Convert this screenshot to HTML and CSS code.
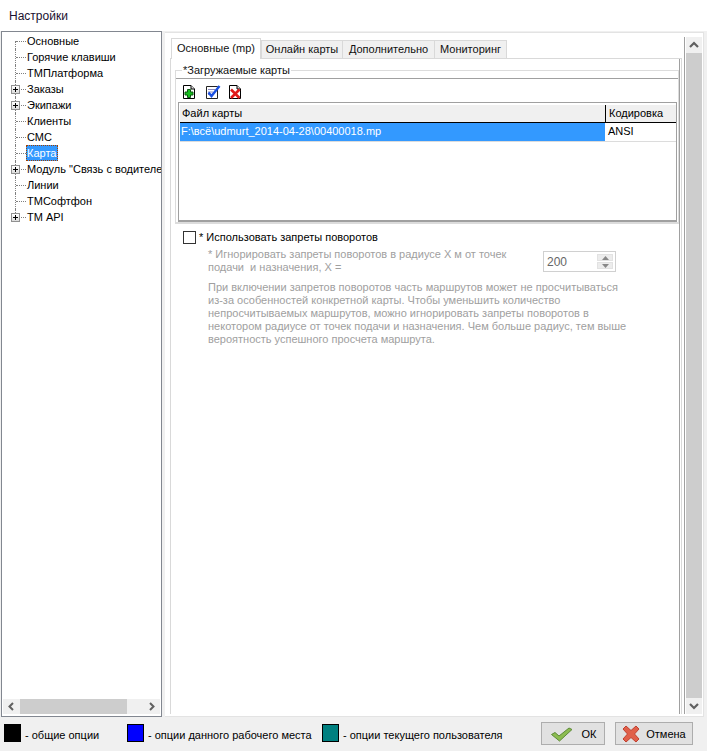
FILE: index.html
```html
<!DOCTYPE html>
<html lang="ru">
<head>
<meta charset="utf-8">
<title>Настройки</title>
<link rel="stylesheet" href="styles.css">
</head>
<body>
<div class="window">
  <header class="title">Настройки</header>
  <div class="content">
    <aside class="tree">
      <ul class="nodes">
        <li class="node"><span class="gutter"></span><span class="label">Основные</span></li>
        <li class="node"><span class="gutter"></span><span class="label">Горячие клавиши</span></li>
        <li class="node"><span class="gutter"></span><span class="label">ТМПлатформа</span></li>
        <li class="node"><span class="gutter"><i class="exp"></i></span><span class="label">Заказы</span></li>
        <li class="node"><span class="gutter"><i class="exp"></i></span><span class="label">Экипажи</span></li>
        <li class="node"><span class="gutter"></span><span class="label">Клиенты</span></li>
        <li class="node"><span class="gutter"></span><span class="label">СМС</span></li>
        <li class="node"><span class="gutter"></span><span class="label selected">Карта</span></li>
        <li class="node"><span class="gutter"><i class="exp"></i></span><span class="label">Модуль "Связь с водителем"</span></li>
        <li class="node"><span class="gutter"></span><span class="label">Линии</span></li>
        <li class="node"><span class="gutter"></span><span class="label">ТМСофтфон</span></li>
        <li class="node last"><span class="gutter"><i class="exp"></i></span><span class="label">ТМ API</span></li>
      </ul>
      <div class="hscroll">
        <svg class="arrow" width="17" height="15" viewBox="0 0 17 15"><path d="M10 4 L6.500 7.500 L10 11" fill="none" stroke="#606060" stroke-width="2"/></svg>
        <div class="htrack"><div class="hthumb"></div></div>
        <svg class="arrow" width="17" height="15" viewBox="0 0 17 15"><path d="M7 4 L10.500 7.500 L7 11" fill="none" stroke="#606060" stroke-width="2"/></svg>
      </div>
    </aside>
    <main class="main">
      <div class="pane">
        <nav class="tabs">
          <div class="tab active">Основные (mp)</div>
          <div class="tab">Онлайн карты</div>
          <div class="tab">Дополнительно</div>
          <div class="tab">Мониторинг</div>
        </nav>
        <section class="page">
          <div class="page-body">
            <fieldset class="group">
              <legend class="legend">*Загружаемые карты</legend>
              <div class="inner">
                <div class="toolbar">
                  <svg width="16" height="16" viewBox="0 0 16 16"><path d="M1.500 1.500H9L12.500 5V14.500H1.500Z" fill="#fff" stroke="#000"/><path d="M9 1.500V5H12.500" fill="#ddd" stroke="#000"/><path d="M5.500 5.500H8.500V8H11V11H8.500V13.500H5.500V11H3V8H5.500Z" fill="#18c020" stroke="#0a5a10"/></svg>
                  <svg width="16" height="16" viewBox="0 0 16 16"><path d="M1.500 2.500H12.500V14.500H1.500Z" fill="#fff" stroke="#222"/><path d="M3 5.500H10M3 8H8M3 10.500H7" stroke="#8a8ac0"/><path d="M3.500 8.500L6.500 12L14.500 2" fill="none" stroke="#1a50e0" stroke-width="2.400"/></svg>
                  <svg width="16" height="16" viewBox="0 0 16 16"><path d="M1.500 1.500H9L12.500 5V14.500H1.500Z" fill="#fff" stroke="#000"/><path d="M9 1.500V5H12.500" fill="#ddd" stroke="#000"/><path d="M3 5.500L11.500 14M11.500 5.500L3 14" stroke="#e01818" stroke-width="2.600"/></svg>
                </div>
                <div class="grid">
                  <div class="grid-head">
                    <div class="cell col-file">Файл карты</div>
                    <div class="cell col-enc">Кодировка</div>
                  </div>
                  <div class="grid-row">
                    <div class="cell col-file row-sel">F:\всё\udmurt_2014-04-28\00400018.mp</div>
                    <div class="cell col-enc">ANSI</div>
                  </div>
                </div>
              </div>
            </fieldset>
            <label class="check-line"><span class="check"></span><span>* Использовать запреты поворотов</span></label>
            <div class="radius">
              <p class="radius-text">* Игнорировать запреты поворотов в радиусе Х м от точек<br>подачи&nbsp; и назначения, Х =</p>
              <div class="spin">
                <span class="spin-value">200</span>
                <span class="spin-btns">
                  <span class="spin-btn"><svg width="7" height="4" viewBox="0 0 7 4"><path d="M3.500 0L7 4H0Z" fill="#888"/></svg></span>
                  <span class="spin-btn"><svg width="7" height="4" viewBox="0 0 7 4"><path d="M0 0H7L3.500 4Z" fill="#888"/></svg></span>
                </span>
              </div>
            </div>
            <p class="note">При включении запретов поворотов часть маршрутов может не просчитываться<br>из-за особенностей конкретной карты. Чтобы уменьшить количество<br>непросчитываемых маршрутов, можно игнорировать запреты поворотов в<br>некотором радиусе от точек подачи и назначения. Чем больше радиус, тем выше<br>вероятность успешного просчета маршрута.</p>
          </div>
        </section>
      </div>
      <div class="vscroll">
        <svg width="16" height="16" viewBox="0 0 16 16"><path d="M4 10L8 6L12 10" fill="none" stroke="#606060" stroke-width="2.200"/></svg>
        <div class="vthumb"></div>
        <svg width="16" height="16" viewBox="0 0 16 16"><path d="M4 6L8 10L12 6" fill="none" stroke="#606060" stroke-width="2.200"/></svg>
      </div>
    </main>
  </div>
  <footer class="footer">
    <div class="legend-item item-general"><span class="swatch black"></span><span class="legend-text">- общие опции</span></div>
    <div class="legend-item item-place"><span class="swatch blue"></span><span class="legend-text">- опции данного рабочего места</span></div>
    <div class="legend-item item-user"><span class="swatch teal"></span><span class="legend-text">- опции текущего пользователя</span></div>
    <button class="btn btn-ok" type="button"><svg width="24" height="16" viewBox="0 0 24 16"><path d="M1.500 8.500L5 6.500L9 10L19 2L22 3.500L9.500 15Z" fill="#8cbc50" stroke="#5d8a38"/></svg><span>ОК</span></button>
    <button class="btn btn-cancel" type="button"><svg width="18" height="18" viewBox="0 0 18 18"><path d="M4 1L9 5.500L14 1L17 4L12.500 9L17 14L14 17L9 12.500L4 17L1 14L5.500 9L1 4Z" fill="#e0604a" stroke="#c04030"/></svg><span>Отмена</span></button>
  </footer>
</div>
</body>
</html>
```
FILE: styles.css
```css
* { box-sizing: border-box; }
html, body { margin: 0; padding: 0; }
body {
  width: 707px;
  height: 751px;
  overflow: hidden;
  font-family: "Liberation Sans", Arial, sans-serif;
  font-size: 11px;
  color: #000;
}
.window {
  width: 707px;
  height: 751px;
  display: flex;
  flex-direction: column;
  background: #f0f0f0;
}
.title {
  height: 31px;
  flex: none;
  background: #fff;
  padding: 9px 0 0 9px;
  font-size: 12px;
  line-height: 15px;
  color: #1a1030;
}
.content {
  height: 686px;
  flex: none;
  display: flex;
}
.tree {
  width: 161px;
  height: 686px;
  margin-left: 1px;
  flex: none;
  border: 1px solid #828790;
  background: #fff;
  display: flex;
  flex-direction: column;
  overflow: hidden;
}
.nodes {
  list-style: none;
  margin: 0;
  padding: 1px 0 0;
  flex: 1;
  min-height: 0;
}
.node {
  height: 16px;
  display: flex;
  white-space: nowrap;
  overflow: hidden;
}
.gutter {
  width: 24px;
  height: 16px;
  flex: none;
  position: relative;
}
.gutter::before {
  content: "";
  position: absolute;
  left: 13px;
  top: 0;
  height: 16px;
  border-left: 1px dotted #808080;
}
.gutter::after {
  content: "";
  position: absolute;
  left: 14px;
  top: 8px;
  width: 10px;
  border-top: 1px dotted #808080;
}
.last .gutter::before { height: 8px; }
.node:first-child .gutter::before { top: 8px; height: 8px; }
.exp {
  position: absolute;
  z-index: 1;
  left: 9px;
  top: 4px;
  width: 9px;
  height: 9px;
  border: 1px solid #919191;
  background: linear-gradient(#000, #000) center / 5px 1px no-repeat, linear-gradient(#000, #000) center / 1px 5px no-repeat, linear-gradient(#fff, #dcdcdc);
}
.label {
  height: 16px;
  line-height: 16px;
  padding: 0 2px 0 1px;
}
.selected {
  background: #3399ff;
  color: #fff;
  outline: 1px dotted #a04000;
  outline-offset: -1px;
}
.hscroll {
  height: 15px;
  flex: none;
  margin: 0 1px 2px;
  display: flex;
  align-items: center;
  background: #f0f0f0;
}
.arrow { flex: none; }
.htrack { flex: 1; height: 15px; }
.hthumb { width: 107px; height: 15px; background: #cdcdcd; }
.main {
  width: 539px;
  height: 685px;
  margin-left: 3px;
  margin-top: 1px;
  flex: none;
  background: #fff;
  border: 1px solid #e3e3e3;
  border-left: 0;
  display: flex;
  padding: 5px 1px 2px 5px;
}
.pane {
  width: 512px;
  flex: none;
  display: flex;
  flex-direction: column;
}
.tabs {
  display: flex;
  height: 20px;
  padding-left: 1px;
  align-items: flex-end;
  flex: none;
}
.tab {
  height: 18px;
  line-height: 17px;
  text-align: center;
  background: #f0f0f0;
  border: 1px solid #d9d9d9;
  border-bottom: 0;
  margin-left: -1px;
  color: #111;
}
.tab:nth-child(2) { width: 82px; }
.tab:nth-child(3) { width: 93px; }
.tab:nth-child(4) { width: 73px; }
.tab.active {
  width: 90px;
  height: 21px;
  line-height: 19px;
  background: #fff;
  position: relative;
  top: 1px;
  margin-left: 0;
  margin-right: 1px;
  z-index: 1;
}
.page {
  flex: 1;
  min-height: 0;
  border: 1px solid #d9d9d9;
  border-bottom: 0;
  padding: 0 1px 0 4px;
}
.page-body {
  height: 100%;
  padding-top: 5px;
  border-right: 1px solid #a0a0a0;
}
.group {
  margin: 0;
  padding: 0;
  width: 504px;
  height: 160px;
  border: 1px solid #dcdcdc;
  border-width: 1px 1px 2px 1px;
}
.legend {
  margin-left: 6px;
  padding: 0 1px;
  line-height: 13px;
  color: #111;
}
.inner {
  height: 144px;
  margin-top: 1px;
  border-top: 1px solid #a0a0a0;
  display: flex;
  flex-direction: column;
}
.toolbar {
  height: 23px;
  display: flex;
  gap: 7px;
  padding: 5px 0 0 6px;
  flex: none;
}
.grid {
  margin-left: 2px;
  margin-right: 1px;
  flex: 1;
  border: 1px solid #a0a0a0;
  border-bottom-width: 2px;
  padding: 2px 0 0 1px;
}
.grid-head, .grid-row { display: flex; }
.grid-head { height: 18px; border-bottom: 1px solid #000; background: #f0f0f0; }
.grid-row { height: 19px; border-bottom: 1px solid #dcdcdc; }
.cell { line-height: 17px; padding-left: 2px; white-space: nowrap; }
.col-file { width: 425px; flex: none; }
.col-enc { flex: 1; }
.grid-head .col-enc { border-left: 1px solid #000; padding-left: 3px; }
.row-sel { background: #3399ff; color: #fff; height: 18px; padding-left: 1px; }
.grid-row .col-enc { padding-left: 3px; }
.check-line {
  display: flex;
  align-items: center;
  gap: 3px;
  height: 14px;
  margin: 6px 0 0 8px;
}
.check {
  width: 13px;
  height: 13px;
  border: 1px solid #333;
  background: #fff;
  flex: none;
}
.radius {
  display: flex;
  margin: 3px 0 0 33px;
  color: #a0a0a0;
}
.radius-text {
  margin: 1px 0 0;
  width: 335px;
  flex: none;
  line-height: 13px;
}
.spin {
  width: 73px;
  height: 21px;
  margin-top: 4px;
  border: 1px solid #d0d0d0;
  display: flex;
  justify-content: space-between;
  align-items: center;
  padding: 0 2px 0 3px;
  font-size: 12px;
  color: #666;
}
.spin-btns { display: flex; flex-direction: column; gap: 1px; }
.spin-btn {
  width: 16px;
  height: 7px;
  background: #ececec;
  border: 1px solid #e2e2e2;
  display: flex;
  align-items: center;
  justify-content: center;
}
.note {
  margin: 7px 0 0 33px;
  line-height: 13px;
  color: #a0a0a0;
  white-space: nowrap;
}
.vscroll {
  width: 18px;
  margin-top: -1px;
  margin-left: 2px;
  padding-left: 1px;
  border-left: 1px solid #a0a0a0;
  flex: none;
  background: #fff;
  display: flex;
  flex-direction: column;
}
.vscroll svg { background: #f0f0f0; flex: none; }
.vthumb { flex: 1; background: #cdcdcd; }
.footer {
  flex: 1;
  display: flex;
  align-items: flex-start;
  padding-left: 4px;
}
.legend-item {
  display: flex;
  align-items: center;
  gap: 4px;
  height: 18px;
  margin-top: 7px;
}
.legend-text { padding-top: 3px; }
.item-general { width: 123px; }
.item-place { width: 195px; }
.item-user { width: 219px; }
.swatch {
  width: 17px;
  height: 18px;
  border: 1px solid #000;
  flex: none;
}
.black { background: #000; }
.blue { background: #0000ff; }
.teal { background: #008080; }
.btn {
  height: 23px;
  margin-top: 5px;
  border: 1px solid #adadad;
  background: #e1e1e1;
  display: flex;
  align-items: center;
  justify-content: center;
  gap: 8px;
  padding: 0;
  font: inherit;
  color: #000;
}
.btn-ok { width: 64px; }
.btn-cancel { width: 78px; margin-left: 10px; gap: 6px; }
```
